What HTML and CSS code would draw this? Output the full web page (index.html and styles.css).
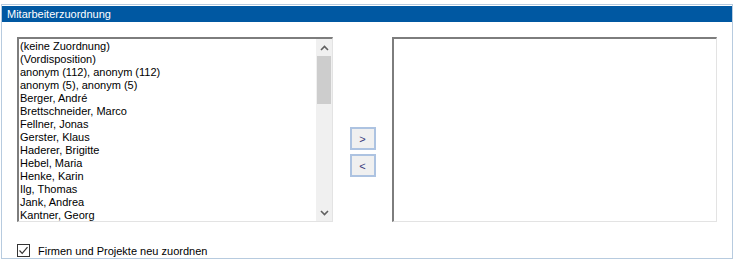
FILE: index.html
```html
<!DOCTYPE html>
<html lang="de">
<head>
  <meta charset="UTF-8">
  <title>Mitarbeiterzuordnung</title>
  <link rel="stylesheet" href="styles.css">
</head>
<body>

<!-- Gruppe -->
<div class="panel">
  <div class="panel-title">Mitarbeiterzuordnung</div>

  <div class="panel-body">
    <div class="lists">
      <!-- verfuegbare Mitarbeiter -->
      <div class="listbox left-list">
        <div class="items">
          <div class="item">(keine Zuordnung)</div>
          <div class="item">(Vordisposition)</div>
          <div class="item">anonym (112), anonym (112)</div>
          <div class="item">anonym (5), anonym (5)</div>
          <div class="item">Berger, André</div>
          <div class="item">Brettschneider, Marco</div>
          <div class="item">Fellner, Jonas</div>
          <div class="item">Gerster, Klaus</div>
          <div class="item">Haderer, Brigitte</div>
          <div class="item">Hebel, Maria</div>
          <div class="item">Henke, Karin</div>
          <div class="item">Ilg, Thomas</div>
          <div class="item">Jank, Andrea</div>
          <div class="item">Kantner, Georg</div>
        </div>
        <div class="scrollbar">
          <div class="arrow">
            <svg width="9" height="6" viewBox="0 0 9 6"><path d="M1 5 L4.5 1.5 L8 5" fill="none" stroke="#606060" stroke-width="1.6"/></svg>
          </div>
          <div class="track">
            <div class="thumb"></div>
          </div>
          <div class="arrow">
            <svg width="9" height="6" viewBox="0 0 9 6"><path d="M1 1 L4.5 4.5 L8 1" fill="none" stroke="#606060" stroke-width="1.6"/></svg>
          </div>
        </div>
      </div>

      <!-- Buttons -->
      <div class="move-buttons">
        <button class="move-btn">&gt;</button>
        <button class="move-btn">&lt;</button>
      </div>

      <!-- zugeordnete Mitarbeiter -->
      <div class="listbox right-list"></div>
    </div>

    <label class="check">
      <span class="checkbox">
        <svg width="11" height="11" viewBox="0 0 11 11"><path d="M1.5 5.5 L4.2 8.3 L9.5 2.2" fill="none" stroke="#333" stroke-width="1.2"/></svg>
      </span>
      Firmen und Projekte neu zuordnen
    </label>
  </div>
</div>

</body>
</html>
```

FILE: styles.css
```css
body {
  margin: 0;
  padding: 0;
  background: #fff;
  font-family: "Liberation Sans", Arial, sans-serif;
  font-size: 11px;
  color: #000;
}
.panel {
  margin: 4px 0 0 1px;
  width: 730px;
  height: 253px;
  border: 1px solid #b7cbdf;
  display: flex;
  flex-direction: column;
}
.panel-title {
  margin-top: 1px;
  height: 16px;
  line-height: 16px;
  background: #0058a2;
  color: #fff;
  font-size: 11px;
  padding-left: 5px;
}
.panel-body {
  padding: 15px 0 0 15px;
}
.lists {
  display: flex;
  align-items: stretch;
}
.listbox {
  box-sizing: border-box;
  height: 185px;
  border-top: 2px solid #7d7d7d;
  border-left: 2px solid #7d7d7d;
  border-right: 1px solid #e3e3e3;
  border-bottom: 1px solid #e3e3e3;
  background: #fff;
}
.left-list {
  width: 316px;
  display: flex;
}
.right-list {
  width: 325px;
}
.items {
  flex: 1;
  padding: 1px 0 0 1px;
  overflow: hidden;
}
.item {
  height: 13px;
  line-height: 13px;
  white-space: nowrap;
}
.scrollbar {
  width: 16px;
  background: #f0f0f0;
  display: flex;
  flex-direction: column;
}
.arrow {
  height: 17px;
  display: flex;
  align-items: center;
  justify-content: center;
}
.track {
  flex: 1;
  padding: 0 1px;
}
.thumb {
  height: 48px;
  background: #cdcdcd;
}
.move-buttons {
  width: 59px;
  display: flex;
  flex-direction: column;
  align-items: center;
  gap: 4px;
  padding-top: 90px;
}
.move-btn {
  box-sizing: border-box;
  width: 26px;
  height: 23px;
  padding: 0;
  border: 2px solid #adc3e1;
  background: #f0f0f0;
  font-family: "Liberation Sans", Arial, sans-serif;
  font-size: 11px;
  color: #3a3a7a;
}
.check {
  display: flex;
  align-items: center;
  gap: 8px;
  margin-top: 22px;
  font-size: 11px;
}
.checkbox {
  box-sizing: border-box;
  width: 13px;
  height: 13px;
  border: 1px solid #333;
  background: #fff;
  display: flex;
  align-items: center;
  justify-content: center;
}
```
